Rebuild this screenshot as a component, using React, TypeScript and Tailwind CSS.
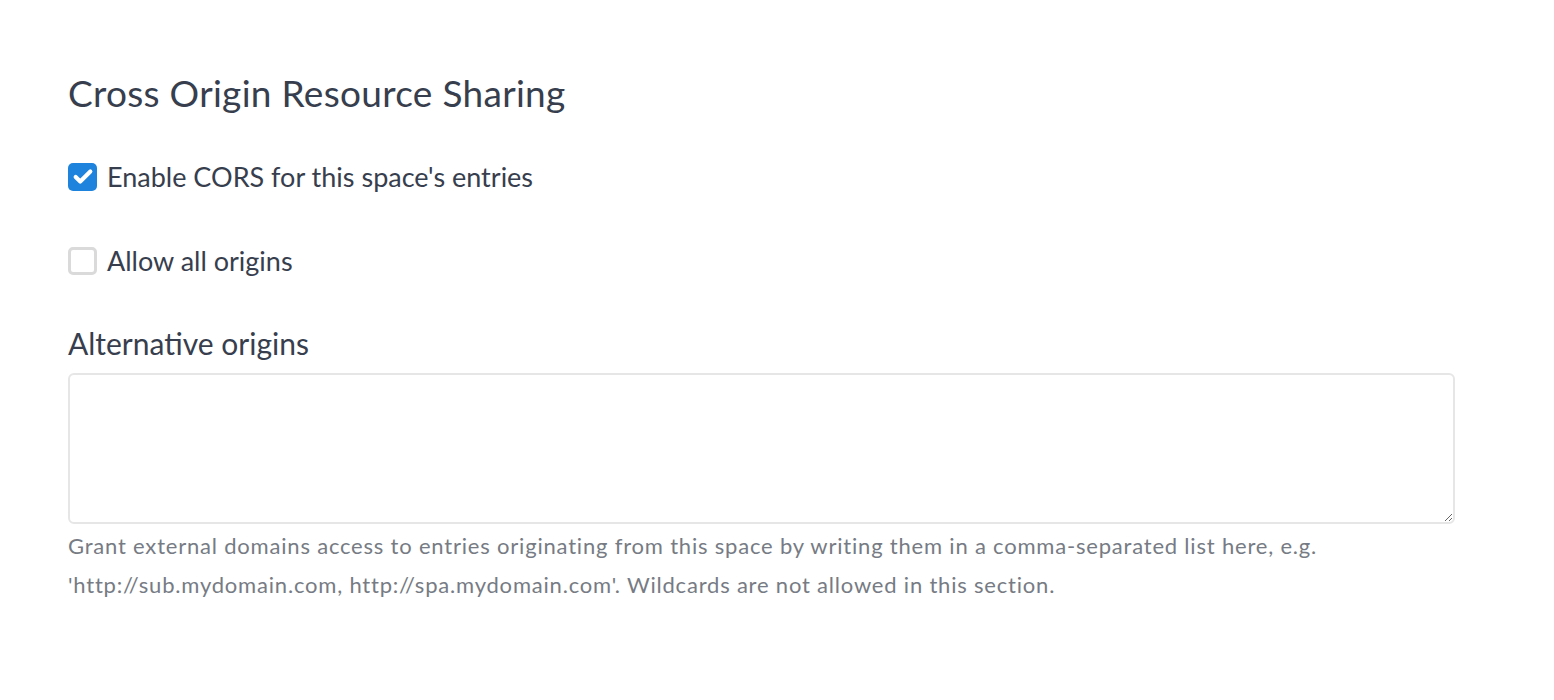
import { Check } from "lucide-react";

export default function App() {
  return (
    <div className="min-h-[700px] bg-white text-[#373e4d] font-['Lato',sans-serif]">
      <div className="pl-[68px] pr-[99px] pt-[69px]">
        <h2 className="text-[37px] leading-[48px] font-normal tracking-[0.3px]">
          Cross Origin Resource Sharing
        </h2>

        <label className="mt-[46px] flex items-center gap-[10px] h-[28px] text-[27px]">
          <span className="flex h-[28px] w-[29px] shrink-0 items-center justify-center rounded-[5px] bg-[#1e83dc]">
            <Check className="h-[22px] w-[22px] text-white" strokeWidth={4.5} />
          </span>
          Enable CORS for this space's entries
        </label>

        <label className="mt-[56px] flex items-center gap-[10px] h-[28px] text-[27px]">
          <span className="h-[28px] w-[29px] shrink-0 rounded-[5px] border-[3px] border-[#dadada] bg-white" />
          Allow all origins
        </label>

        <h3 className="mt-[50px] text-[30px] leading-[36px] font-normal">Alternative origins</h3>

        <textarea className="mt-[12px] block h-[151px] w-full rounded-[6px] border-2 border-[#e6e6e6] outline-none resize-y" />

        <p className="mt-[2px] text-[22px] leading-[39px] tracking-[0.8px] text-[#767b84]">
          Grant external domains access to entries originating from this space by writing them in a comma-separated list here, e.g. 'http://sub.mydomain.com, http://spa.mydomain.com'. Wildcards are not allowed in this section.
        </p>
      </div>
    </div>
  );
}
